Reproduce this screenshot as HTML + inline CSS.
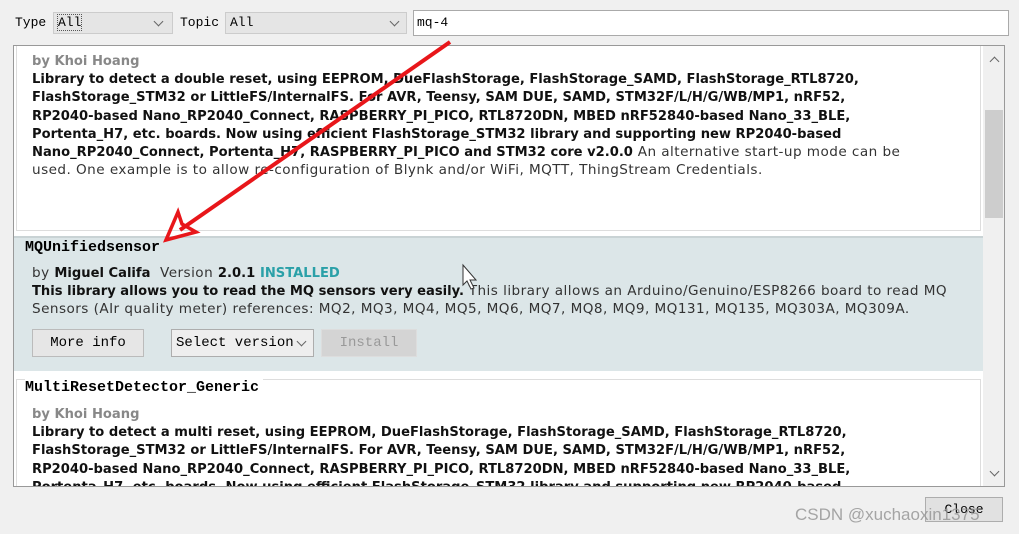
<!DOCTYPE html>
<html><head><meta charset="utf-8"><style>
body{margin:0;width:1019px;height:534px;background:#f0f0f0;position:relative;overflow:hidden;font-family:"DejaVu Sans",Verdana,sans-serif;}
.abs{position:absolute}
.mono{font-family:"Liberation Mono",monospace;font-size:13px}
.t{font-size:13.6px;color:#333;white-space:nowrap;letter-spacing:0.45px}
.t div{height:18.2px;line-height:18.2px}
.t b{color:#111;font-size:13.1px;letter-spacing:0}
.sel{background:#fff;border:1px solid #aaa;height:22px;box-sizing:border-box}
.btn{border:1px solid #adadad;background:#e1e1e1;box-sizing:border-box;text-align:center}
.chev{position:absolute;width:6px;height:6px;border-right:1px solid #666;border-bottom:1px solid #666;transform:rotate(45deg)}
.ttl{font-family:"Liberation Mono",monospace;font-size:15px;font-weight:bold;color:#000}
</style></head><body>
<div class="abs mono" style="left:15px;top:15px">Type</div>
<div class="abs sel" style="left:53px;top:12px;width:120px;background:#e5e5e5;border-color:#ccc"><span class="mono abs" style="left:4px;top:2px;outline:1px dotted #555">All</span><div class="chev" style="left:101px;top:5px"></div></div>
<div class="abs mono" style="left:180px;top:15px">Topic</div>
<div class="abs sel" style="left:225px;top:12px;width:182px;background:#e5e5e5;border-color:#ccc"><span class="mono abs" style="left:4px;top:2px">All</span><div class="chev" style="left:165px;top:5px"></div></div>
<div class="abs sel" style="left:413px;top:10px;width:596px;height:26px;border-color:#aaa"><span class="mono abs" style="left:3px;top:4px">mq-4</span></div>

<div class="abs" style="left:13px;top:45px;width:992px;height:442px;border:1px solid #999;background:#fff;box-sizing:border-box;overflow:hidden">
 <div class="abs" style="left:2px;top:0;width:965px;height:185px;border:1px solid #ddd;border-top:none;box-sizing:border-box"></div>
 <div class="abs t" style="left:18px;top:6px">
 <div><b style="color:#888">by Khoi Hoang</b></div>
 <div><b>Library to detect a double reset, using EEPROM, DueFlashStorage, FlashStorage_SAMD, FlashStorage_RTL8720,</b></div>
 <div><b>FlashStorage_STM32 or LittleFS/InternalFS. For AVR, Teensy, SAM DUE, SAMD, STM32F/L/H/G/WB/MP1, nRF52,</b></div>
 <div><b>RP2040-based Nano_RP2040_Connect, RASPBERRY_PI_PICO, RTL8720DN, MBED nRF52840-based Nano_33_BLE,</b></div>
 <div><b>Portenta_H7, etc. boards. Now using efficient FlashStorage_STM32 library and supporting new RP2040-based</b></div>
 <div><b>Nano_RP2040_Connect, Portenta_H7, RASPBERRY_PI_PICO and STM32 core v2.0.0</b> An alternative start-up mode can be</div>
 <div>used. One example is to allow re-configuration of Blynk and/or WiFi, MQTT, ThingStream Credentials.</div>
 </div>
 <div class="abs" style="left:0;top:190px;width:969px;height:135px;background:#dce6e8;border-top:2px solid #c9d3d5;box-sizing:border-box"></div>
 <div class="abs ttl" style="left:11px;top:193px">MQUnifiedsensor</div>
 <div class="abs t" style="left:18px;top:218px">
 <div>by <b>Miguel Califa</b>&nbsp; Version <b>2.0.1</b> <b style="color:#2aa0a8">INSTALLED</b></div>
 <div><b>This library allows you to read the MQ sensors very easily.</b> This library allows an Arduino/Genuino/ESP8266 board to read MQ</div>
 <div>Sensors (AIr quality meter) references: MQ2, MQ3, MQ4, MQ5, MQ6, MQ7, MQ8, MQ9, MQ131, MQ135, MQ303A, MQ309A.</div>
 </div>
 <div class="abs btn mono" style="left:18px;top:283px;width:112px;height:28px;line-height:26px;border-color:#bbb;background:#e6e6e6;font-size:14px">More info</div>
 <div class="abs btn mono" style="left:157px;top:283px;width:143px;height:28px;line-height:26px;text-align:left;padding-left:4px;background:#eee;font-size:14px">Select version<div class="chev" style="left:126px;top:8px"></div></div>
 <div class="abs btn mono" style="left:307px;top:283px;width:96px;height:28px;line-height:26px;color:#999;background:#d4d4d4;border-color:#ddd;font-size:14px">Install</div>
 <div class="abs" style="left:2px;top:333px;width:965px;height:120px;border:1px solid #ddd;box-sizing:border-box"></div>
 <div class="abs ttl" style="left:11px;top:333px;background:#fff;padding-right:4px">MultiResetDetector_Generic</div>
 <div class="abs t" style="left:18px;top:359px">
 <div><b style="color:#888">by Khoi Hoang</b></div>
 <div><b>Library to detect a multi reset, using EEPROM, DueFlashStorage, FlashStorage_SAMD, FlashStorage_RTL8720,</b></div>
 <div><b>FlashStorage_STM32 or LittleFS/InternalFS. For AVR, Teensy, SAM DUE, SAMD, STM32F/L/H/G/WB/MP1, nRF52,</b></div>
 <div><b>RP2040-based Nano_RP2040_Connect, RASPBERRY_PI_PICO, RTL8720DN, MBED nRF52840-based Nano_33_BLE,</b></div>
 <div><b>Portenta_H7, etc. boards. Now using efficient FlashStorage_STM32 library and supporting new RP2040-based</b></div>
 </div>
 <div class="abs" style="left:969px;top:0;width:21px;height:440px;background:#f0f0f0"></div>
 <div class="abs" style="left:971px;top:64px;width:18px;height:108px;background:#cdcdcd"></div>
 <div class="chev" style="left:977px;top:12px;transform:rotate(225deg)"></div>
 <div class="chev" style="left:977px;top:422px"></div>
</div>

<div class="abs btn mono" style="left:925px;top:497px;width:78px;height:25px;line-height:24px">Close</div>
<div class="abs" style="left:795px;top:505px;font-family:'Liberation Sans',sans-serif;font-size:17px;color:rgba(150,150,150,0.85)">CSDN @xuchaoxin1375</div>

<svg class="abs" style="left:0;top:0" width="1019" height="534">
 <line x1="450" y1="42" x2="180" y2="230" stroke="#e8161a" stroke-width="4"/>
 <polygon points="166,240 178,212 182,224 196,232" fill="none" stroke="#e8161a" stroke-width="3.5"/>
 <path d="M463 265 L463 285 L467 281 L471 289 L474 288 L470 280 L476 280 Z" fill="#fff" stroke="#333" stroke-width="1"/>
</svg>
</body></html>
